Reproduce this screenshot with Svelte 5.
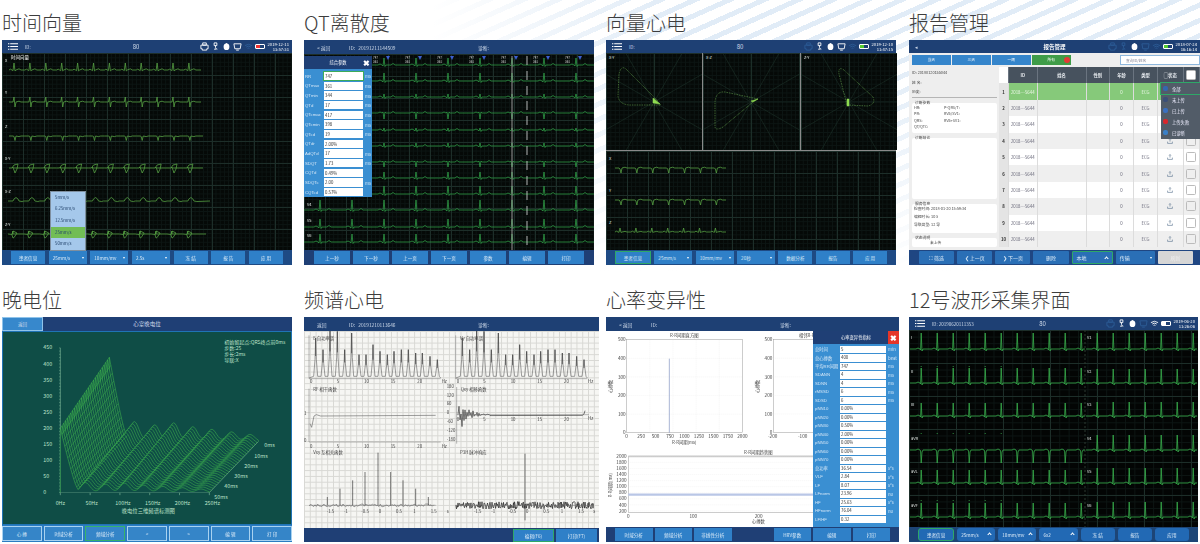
<script>
  // small seeded random so the noisy traces stay the same on every load
  let seed = 11
  const rnd = () => (seed = (seed * 16807) % 2147483647) / 2147483647

  // repeat one beat template along a baseline
  const wave = (x0, y, pitch, n, end, tpl) => {
    let d = `M${x0} ${y}`
    for (let i = 0; i < n; i++) {
      const bx = x0 + i * pitch
      for (const [dx, dy] of tpl) d += `L${(bx + dx).toFixed(1)} ${(y + dy).toFixed(1)}`
    }
    return d + `L${end} ${y}`
  }

  const beat = (r, s = 1, t = 1.5) => [[0, 0], [1.5, -0.8], [3, 0], [4, s], [5, -r], [6, s * 1.5], [7, 0], [10, -t], [12, 0]]

  const timeRows = [
    { label: 'X', y: 17, x: 7, end: 199, tpl: beat(7, 0.6, 1.2) },
    { label: 'Y', y: 49, x: 7, end: 199, tpl: [[0, 0], [4, 0], [5, -5], [6, 5], [7, 0], [10, -0.8], [12, 0]] },
    { label: 'Z', y: 83, x: 7, end: 201, tpl: [[0, 0], [4, 0], [5, 0.5], [6, 4.5], [7, 0], [10, 0.6], [12, 0]] },
    { label: 'X-Y', y: 115, x: 7, end: 201, tpl: [[0, 0], [3, 0], [5, -3], [9, -4], [8, 1], [6, 5], [5, 2], [3.5, -1], [4, 0], [8, 0]] },
    { label: 'X-Z', y: 148, x: 6, end: 208, tpl: [[0, 0], [5, 0], [6, -2], [8, -3.5], [10, -2], [11, 0], [14, 0.5]] },
    { label: 'Z-Y', y: 181, x: 6, end: 204, tpl: [[0, 0], [4, 0.5], [5, -3], [9, -1], [6, 3.5], [5, 4], [4, 1], [5, -3], [5, 0], [8, 0]] }
  ]

  const qtBeat = (r) => [[0, 0], [10, 0], [12, -1], [14, 0], [15, r > 0 ? 1 : -1], [16, -r], [17, r > 0 ? 1.5 : -1], [18, 0], [23, 0], [25, -1.5], [27, 0]]
  const qtRows = [
    [11, 7], [27, 8], [43, 3], [59, -6], [76, 2], [92, 3], [108, -5], [124, 6], [140, 8], [156, 10], [173, 8], [188, 8]
  ].map(([y, r]) => wave(0, y, 32, 9, 290, qtBeat(r)))
  const qtLeads = [['V4', 152], ['V5', 168], ['V6', 183]]
  const qtMarks = [0, 1, 2, 3, 4, 5, 6].map((i) => 84 + i * 32)

  const qtParams = [
    ['RR', '747', 'ms'], ['QTmax', '361', 'ms'], ['QTmin', '344', 'ms'], ['QTd', '17', 'ms'], ['QTcmax', '417', 'ms'],
    ['QTcmin', '398', 'ms'], ['QTcd', '19', 'ms'], ['QTdr', '2.00%', ''], ['AdQTd', '17', 'ms'], ['SDQT', '1.73', 'ms'],
    ['CQTd', '0.49%', ''], ['SDQTc', '2.00', 'ms'], ['CQTcd', '0.57%', '']
  ]

  const spokes = [0, 30, 60, 90, 120, 150]
  const loops = [
    { label: 'X-Y', d: 'M52 48L20 16Q15 12 13 21L12 43Q13 51 23 52L55 52L48 45', core: 'M47 45L54 51L47 50Z' },
    { label: 'X-Z', d: 'M55 46L22 39Q13 38 12 49L12 74Q13 78 20 74L50 49', core: 'M48 48L55 46L50 49Z' },
    { label: 'Z-Y', d: 'M46 52L38 21Q37 13 43 17L72 44Q75 51 67 53L46 52', core: 'M46 46L48 46L48 53L46 53Z' }
  ]
  const vecDown = [[0, 0], [4, 0], [5, 1], [6, 5], [7, 0], [10, -0.8], [12, 0]]
  const vecRows = [
    { label: 'X', y: 17, x: 9, n: 7, end: 120, tpl: vecDown },
    { label: 'Y', y: 49, x: 9, n: 7, end: 120, tpl: vecDown },
    { label: 'Z', y: 81, x: 9, n: 7, end: 120, tpl: beat(4, 0.3, 0.6) }
  ]

  // waterfall plot of the late potential screen, worked out in 3x coordinates
  const px = (f, d) => 178 + (f / 250) * 447 + d * 147
  const py = (d, h) => 658 - d * 153 - h * 0.964
  const humps = [[42, 62], [76, 52], [108, 58], [140, 46], [172, 38], [205, 30], [236, 22]]
  const height = (f, d) => {
    let h = f < 30 ? (200 + 62 * d) * Math.pow(1 - f / 30, 1.15) : 0
    for (const [c, a] of humps) {
      const u = (f - c) / 11
      h += a * (0.5 + 0.5 * d) * Math.exp(-u * u)
    }
    return h
  }
  const steps = 28
  const slices = []
  for (let i = 0; i <= steps; i++) {
    const d = 1 - i / steps
    let line = `M${px(0, d).toFixed(1)} ${py(d, 0).toFixed(1)}`
    for (let f = 0; f <= 250; f += 2.5) line += `L${px(f, d).toFixed(1)} ${py(d, height(f, d)).toFixed(1)}`
    slices.push(line + `L${px(250, d).toFixed(1)} ${py(d, 0).toFixed(1)}`)
  }
  const wallLines = []
  for (let f = 0; f <= 30; f += 2.5) {
    let line = ''
    for (let i = 0; i <= steps; i++) {
      const d = i / steps
      line += `${i ? 'L' : 'M'}${px(f, d).toFixed(1)} ${py(d, height(f, d)).toFixed(1)}`
    }
    wallLines.push(line)
  }
  const zAxis = [450, 400, 350, 300, 250, 200, 150, 100, 50, 0]
  const minorTicks = Array.from({ length: 46 }, (_, i) => 658 - i * 9.64)
  const fAxis = ['0Hz', '50Hz', '100Hz', '150Hz', '200Hz', '250Hz']
  const depthAxis = [['0ms', 790, 523], ['10ms', 760, 554], ['20ms', 730, 585], ['30ms', 700, 615], ['40ms', 670, 646], ['50ms', 640, 677]]

  // spectrum screen, also in 3x coordinates
  const spectrumPeaks = [
    [45, 120], [67, 85], [88, 145], [110, 140], [132, 85], [153, 135], [175, 70], [196, 70], [217, 100],
    [238, 80], [260, 70], [280, 80], [302, 85], [323, 85], [345, 75], [365, 75], [388, 65], [410, 55]
  ]
  const spectrum = (off) => {
    let d = `M${25 + off} 318`
    for (const [x, h] of spectrumPeaks) d += `L${x - 6 + off} 313L${x - 2 + off} ${302 - h / 3}L${x + off} ${318 - h}L${x + 2 + off} ${302 - h / 3}L${x + 6 + off} 313`
    return d + `L${420 + off} 318`
  }
  const spectrumTops = (off) => spectrumPeaks.map(([x, h]) => `M${x + off} ${318 - h}V${318 - h * 0.55}`).join('')
  const coherence = 'M28 455L33 466L40 432L47 428L60 432L405 430'
  let phase = 'M472 428'
  for (let x = 472; x < 570; x += 3) {
    const a = x < 540 ? 62 * Math.exp(-(x - 472) / 30) : 3
    phase += `L${x} ${(428 + (x % 2 ? -a : a) * rnd()).toFixed(1)}`
  }
  phase += 'L845 430L850 426L853 416'
  const crossPeaks = [[80, 25], [118, 50], [156, 75], [193, 100], [232, 158], [270, 100], [307, 75], [345, 50], [383, 25]]
  let cross = 'M25 700'
  for (let x = 27; x < 400; x += 4) cross += `L${x} ${(700 + (rnd() - 0.5) * 8).toFixed(1)}`
  let noise = 'M465 700'
  for (let x = 466; x < 880; x += 1.5) noise += `L${x} ${(700 + (rnd() - 0.5) * 22).toFixed(1)}`
  const specTicks = [['0', 28], ['5', 108], ['10', 190], ['15', 270], ['20', 350]]
  const lagTicks = ['-1.5', '-1', '-0.5', '0', '0.5', '1', '1.5']
  const phaseTicks = ['180', '120', '60', '0', '-60', '-120', '-180']

  // HRV screen
  const hrvParams = [
    ['总时间', '5', 'min'], ['总心搏数', '400', 'beat'], ['平均RR间期', '747', 'ms'], ['SDANN', '4', 'ms'], ['SDNN', '4', 'ms'],
    ['rMSSD', '6', 'ms'], ['SDSD', '6', 'ms'], ['pNN10', '0.00%', ''], ['pNN20', '0.00%', ''], ['pNN30', '0.50%', ''],
    ['pNN40', '2.00%', ''], ['pNN50', '0.00%', ''], ['pNN60', '0.00%', ''], ['pNN70', '0.00%', ''], ['总功率', '36.54', 's²s'],
    ['VLF', '2.84', 's²s'], ['LF', '8.07', 's²s'], ['LFnorm', '23.96', 'nu'], ['HF', '25.63', 's²s'], ['HFnorm', '76.04', 'nu'],
    ['LF/HF', '0.32', '']
  ]
  const histY = [500, 400, 300, 200, 100, 0]
  const histX = [0, 250, 500, 750, 1000, 1250, 1500, 1750, 2000]
  const trendY = [2000, 1800, 1600, 1400, 1200, 1000, 800, 600, 400, 200]

  // 12 lead capture screen
  const leadBeat = (r, s = 1) => [[0, 0], [6, 0], [8, -1], [10, 0], [10.6, s], [11.2, -r], [12, s * 2], [13, 0], [14, 0]]
  const leads = [
    ['I', 'V1', 19, 16, 16, false], ['II', 'V2', 53, 15, 14, true], ['III', 'V3', 86, 13, 14, false],
    ['aVR', 'V4', 120, -13, 15, true], ['aVL', 'V5', 153, 13, 15, false], ['aVF', 'V6', 187, 14, 15, true]
  ]
  const leadRows = leads.map(([a, b, y, ra, rb, dotted]) => ({
    a, b, y,
    left: wave(1, y, 16, 11, 176, leadBeat(ra)),
    right: wave(177, y, 16, 7, 288, leadBeat(rb)),
    dots: dotted ? [0, 1, 2, 3, 4, 5].map((i) => 12.2 + i * 16) : []
  }))

  const report = Array.from({ length: 10 }, (_, i) => i + 1)
  const statusItems = [['全部', '#3467b0'], ['未上传', '#3b4f78'], ['已上传', '#3a6fc0'], ['上传失败', '#d9262c'], ['已诊断', '#3a80c8']]
  const speeds = ['5mm/s', '6.25mm/s', '12.5mm/s', '25mm/s', '50mm/s']

  const statusIcons = {
    printer: 'M3 1h4v2.5H3zM1 3.5h8v4H7.5V9h-5V7.5H1z',
    probe: 'M3.5 1h3v3h-3zM5 4v2q0 2 2 2M3.5 8h2',
    tablet: 'M1 2h8l-1 5.5H2zM3.5 9h3',
    wifi: 'M1 4q4-3 8 0M2.5 5.6q2.5-2 5 0M4 7.2q1-.8 2 0'
  }
</script>

{#snippet menuIcon()}
  <svg class="menu" viewBox="0 0 10 7" width="10" height="7">
    <path d="M0 .8h1.4M2.2 .8H10M0 3.5h1.4M2.2 3.5H10M0 6.2h1.4M2.2 6.2H10" stroke="#fff" stroke-width="1.1" />
  </svg>
{/snippet}

{#snippet status(date, time, battery = '#e33', dim = [])}
  <div class="status">
    {#each Object.entries(statusIcons) as [name, d]}
      <svg class:dim={dim.includes(name)} viewBox="0 0 10 10" width="9" height="9">
        <path {d} fill="none" stroke="currentColor" />
      </svg>
      {#if name === 'probe'}
        <svg viewBox="0 0 10 10" width="9" height="9">
          <path d="M5 1a.8.8 0 0 1 .8.8c2 .3 2.4 2 2.4 3.7 0 2.4-1.4 3.5-3.2 3.5S1.8 7.9 1.8 5.5c0-1.7.4-3.4 2.4-3.7A.8.8 0 0 1 5 1z" fill="#fff" />
        </svg>
      {/if}
    {/each}
    <span class="battery"><i style="background:{battery}"></i></span>
    <span class="clock">{date}<br />{time}</span>
  </div>
{/snippet}

{#snippet footer(buttons, kind = '')}
  <div class="foot {kind}">
    {#each buttons as b}
      <span class="btn" class:active={b.active} class:caret={b.caret} class:up={b.up}>{b.t}</span>
    {/each}
  </div>
{/snippet}

{#snippet ecgSvg(rows, h = 197)}
  <svg width="290" height={h} viewBox="0 0 290 {h}">
    {#each rows as r}
      <text class="lead" x="3" y={r.y - 8}>{r.label}</text>
      <path class="trace" d={wave(r.x ?? 7, r.y, 15.9, r.n ?? 12, r.end ?? 120, r.tpl)} />
    {/each}
  </svg>
{/snippet}

<div class="page">
  <section class="card">
    <h2>时间向量</h2>
    <div class="screen">
      <div class="top">
        {@render menuIcon()}
        <span class="id">ID:</span>
        <span class="mid">80</span>
        {@render status('2019-12-11', '13:57:31', '#e33', ['wifi'])}
      </div>
      <div class="body grid">
        <span class="name">时间向量</span>
        {@render ecgSvg(timeRows)}
        <ul class="speeds">
          {#each speeds as s}
            <li class:on={s === '25mm/s'}>{s}</li>
          {/each}
        </ul>
      </div>
      {@render footer([{ t: '患者信息' }, { t: '25mm/s', caret: true }, { t: '10mm/mv', caret: true }, { t: '2.5s', caret: true }, { t: '冻 结' }, { t: '报 告' }, { t: '应 用' }])}
    </div>
  </section>

  <section class="card">
    <h2>QT离散度</h2>
    <div class="screen">
      <div class="top plain">
        <span class="back">&lt; 返回</span>
        <span class="id">ID: &nbsp; 20191211144509</span>
        <span class="diag">诊断:</span>
      </div>
      <div class="body grid">
        <svg width="290" height="196" viewBox="0 0 290 196">
          {#each qtRows as d}
            <path class="trace dark" {d} />
          {/each}
          {#each qtLeads as [label, y]}
            <text class="lead" x="3" {y}>{label}</text>
          {/each}
          {#each qtMarks as x}
            <path d="M{x - 2} 2h4l-2 4z" fill="#3c5fd0" />
            <text class="tiny" x={x - 15} y="5">747</text>
            <text class="tiny" x={x - 15} y="9">361</text>
          {/each}
          <path d="M208 2V196" stroke="#9a9a9a" stroke-width="1" />
          <path d="M223 2V196" stroke="#ddd" stroke-width="0.8" stroke-dasharray="9 6" />
        </svg>
        <div class="dialog">
          <div class="dialog-head">综合参数<b class="close">✖</b></div>
          {#each qtParams as [label, value, unit], i}
            <div class="param">
              <span class="p-label">{label}</span>
              <span class="p-value" class:focus={i === 0}>{value}</span>
              <span class="p-unit">{unit}</span>
            </div>
          {/each}
        </div>
      </div>
      {@render footer([{ t: '上一秒' }, { t: '下一秒' }, { t: '上一页' }, { t: '下一页' }, { t: '参数' }, { t: '编辑' }, { t: '打印' }], 'wide')}
    </div>
  </section>

  <section class="card">
    <h2>向量心电</h2>
    <div class="screen">
      <div class="top">
        {@render menuIcon()}
        <span class="id">ID:</span>
        <span class="mid">80</span>
        {@render status('2019-12-10', '11:47:15', '#5c3', ['printer', 'wifi'])}
      </div>
      <div class="body vector">
        <div class="loops">
          {#each loops as loop}
            <div class="loop grid fine">
              <svg width="96" height="97" viewBox="0 0 96 97">
                {#each spokes as a}
                  <line class="spoke" x1={48 - 80 * Math.cos((a * Math.PI) / 180)} y1={49 - 80 * Math.sin((a * Math.PI) / 180)} x2={48 + 80 * Math.cos((a * Math.PI) / 180)} y2={49 + 80 * Math.sin((a * Math.PI) / 180)} />
                {/each}
                <text class="lead" x="3" y="6">{loop.label}</text>
                <path class="dots" d={loop.d} />
                <path d={loop.core} fill="#8fdc50" stroke="#8fdc50" stroke-width="0.5" />
              </svg>
            </div>
          {/each}
        </div>
        <div class="grid lower">
          {@render ecgSvg(vecRows, 97)}
        </div>
      </div>
      {@render footer([{ t: '患者信息', active: true }, { t: '25mm/s', caret: true }, { t: '10mm/mv', caret: true }, { t: '20秒', caret: true }, { t: '数据分析' }, { t: '报告' }, { t: '应 用' }])}
    </div>
  </section>

  <section class="card">
    <h2>报告管理</h2>
    <div class="screen report">
      <div class="top">
        <span class="back">◂</span>
        <span class="mid strong">报告管理</span>
        {@render status('2018-07-24', '16:16:14', '#5c3', ['printer', 'probe', 'tablet', 'wifi'])}
      </div>
      <div class="tabs">
        <span>当天</span><span>三天</span><span>一周</span>
        <span class="all">所有<i></i></span>
        <span class="search">查询ID/姓名</span>
      </div>
      <div class="main">
        <aside>
          <p>ID: 20180120155044</p>
          <p>姓 名:</p>
          <p class="rule">历史:</p>
          <div class="box b1">
            <em>诊断参数</em>
            <div class="pairs"><span>HR:</span><span>P-QRS/T:</span><span>PR:</span><span>RV5/SV1:</span><span>QRS:</span><span>RV5+SV1:</span><span>QT/QTC:</span></div>
          </div>
          <div class="box b2"><em>诊断结论</em></div>
          <div class="box b3">
            <em>服务信息</em>
            <span>检查时间: 2018-01-20 15:59:34</span>
            <span>编辑时长: 10 s</span>
            <span>导联类型: 12 导</span>
          </div>
          <div class="box b4"><em>状态说明</em><span>未上传</span></div>
        </aside>
        <div class="table">
          <div class="row head">
            <span class="num blank"></span><span>ID</span><span>姓名</span><span>性别</span><span>年龄</span><span>类型</span><span>▢状态</span><span class="check"><i></i></span>
          </div>
          {#each report as n}
            <div class="row" class:sel={n === 1} class:odd={n % 2 === 0}>
              <span class="num">{n}</span>
              <span>2018---5644</span><span></span><span></span><span>0</span><span>ECG</span>
              <span>
                <svg viewBox="0 0 10 10" width="6" height="6"><path d="M5 1v5M3.5 2.500 5 1l1.500 1.500M1 6v3h8V6" fill="none" stroke="#56708c" /></svg>
              </span>
              <span class="check"><i></i></span>
            </div>
          {/each}
          <ul class="filter">
            {#each statusItems as [label, color], i}
              <li class:on={i === 0}><i style="background:{color}"></i>{label}</li>
            {/each}
          </ul>
        </div>
      </div>
      {@render footer([{ t: '⛶ 筛选' }, { t: '❮ 上一页' }, { t: '❯ 下一页' }, { t: '删除' }, { t: '本地', active: true, up: true }, { t: '传输', caret: true }, { t: '刷新' }], 'tools')}
    </div>
  </section>

  <section class="card">
    <h2>晚电位</h2>
    <div class="screen teal">
      <div class="top titlebar">
        <span class="tab">返回</span>
        <span class="mid">心室晚电位</span>
      </div>
      <div class="body lp">
        <svg width="288" height="193" viewBox="6 177 864 578">
          {#each minorTicks as y}
            <path d="M174 {y}h4" stroke="#9ed6b0" stroke-width="1" />
          {/each}
          {#each zAxis as v, i}
            <text class="axis" x="127" y={229 + i * 48.2}>{v}</text>
          {/each}
          {#each fAxis as v, i}
            <text class="axis" x={164 + i * 89.4} y="696">{v}</text>
            <path d="M{178 + i * 89.4} 658v8" stroke="#9ed6b0" stroke-width="1.500" />
          {/each}
          <path d="M178 224V658H625L772 505" fill="none" stroke="#9ed6b0" stroke-width="1.500" />
          {#each depthAxis as [v, x, y]}
            <text class="axis" {x} {y}>{v}</text>
          {/each}
          {#each slices as d}
            <path class="slice" {d} />
          {/each}
          {#each wallLines as d}
            <path class="wall" {d} />
          {/each}
          <text class="axis info" x="670" y="212">初始留起点:QRS终点前0ms</text>
          <text class="axis info" x="670" y="231">步数:25</text>
          <text class="axis info" x="670" y="250">步长:2ms</text>
          <text class="axis info" x="670" y="267">导联:X</text>
          <text class="axis" x="362" y="719">晚电位三维频谱标测图</text>
        </svg>
      </div>
      {@render footer([{ t: '心 搏' }, { t: '时域分析' }, { t: '频域分析', active: true }, { t: '<' }, { t: '>' }, { t: '编 辑' }, { t: '打 印' }], 'boxed')}
    </div>
  </section>

  <section class="card">
    <h2>频谱心电</h2>
    <div class="screen spec">
      <div class="top plain">
        <span class="back">返回</span>
        <span class="id">ID: &nbsp; 20191210113646</span>
        <span class="diag">诊断:</span>
      </div>
      <div class="body paper">
        <svg width="295" height="197" viewBox="10 177 885 591">
          <path class="gray" d={spectrum(0)} />
          <path class="gray" d={spectrum(440)} />
          <path class="ink" d={spectrumTops(0)} />
          <path class="ink" d={spectrumTops(440)} />
          <path class="gray" d={coherence} />
          <path class="ink" d={phase} />
          <path class="gray" d={cross} />
          {#each crossPeaks as [x, h]}
            <path class="ink" d="M{x} 700V{700 - h}" />
          {/each}
          <path class="noise" d={noise} />
          <path class="ink" d="M673 545V745" />
          <path class="axisline" d="M25 190V320H420M465 190V320H860M25 350V510H420M468 345V515M468 428H865M25 700H405M465 700H880" />
          <text class="cap" x="38" y="204">E 自功率谱</text>
          <text class="cap" x="478" y="204">Vy 自功率谱</text>
          <text class="cap" x="38" y="358">RF 相干函数</text>
          <text class="cap" x="480" y="358">Qxy 相移函数</text>
          <text class="cap" x="38" y="546">Vxy 互相关函数</text>
          <text class="cap" x="478" y="546">P3H 脉冲响应</text>
          {#each specTicks as [v, x]}
            <text class="cap" {x} y="333">{v}</text>
            <text class="cap" x={x + 440} y="333">{v}</text>
            <text class="cap" {x} y="528">{v}</text>
            <text class="cap" x={x + 440} y="446">{v}</text>
          {/each}
          <text class="cap" x="423" y="333">Hz</text>
          <text class="cap" x="862" y="333">Hz</text>
          <text class="cap" x="423" y="528">Hz</text>
          <text class="cap" x="862" y="444">Hz</text>
          <text class="cap" x="10" y="429">1</text>
          <text class="cap" x="10" y="511">0</text>
          {#each phaseTicks as v, i}
            <text class="cap" x="438" y={347 + i * 26.500}>{v}</text>
          {/each}
          {#each lagTicks as v, i}
            <text class="cap" x={78 + i * 52} y="722">{v}</text>
            <text class="cap" x={520 + i * 52} y="722">{v}</text>
          {/each}
          <text class="cap" x="438" y="722">s</text>
          <text class="cap" x="878" y="722">s</text>
        </svg>
      </div>
      {@render footer([{ t: '编辑(F6)', active: true }, { t: '打印(F7)' }], 'right')}
    </div>
  </section>

  <section class="card">
    <h2>心率变异性</h2>
    <div class="screen hrv">
      <div class="top plain">
        <span class="back">&lt; 返回</span>
        <span class="id">ID:</span>
        <span class="diag">诊断:</span>
      </div>
      <div class="body white">
        <svg width="293" height="196" viewBox="18 177 879 588">
          <g class="chart">
            <text class="chart-title" x="253" y="195">R-R间期直方图</text>
            <text class="chart-title" x="620" y="195">相邻R-R</text>
            <rect x="80" y="203" width="347" height="279" />
            <rect x="520" y="203" width="347" height="279" />
            {#each [1, 2, 3, 4] as i}
              <path class="dotted" d="M80 {203 + i * 55.8}H427M{80 + i * 69.400} 203V482M520 {203 + i * 55.8}H867" />
            {/each}
            {#each histY as v, i}
              <text class="num-label" x="77" y={208 + i * 55.8}>{v}</text>
              <text class="num-label" x="517" y={208 + i * 55.8}>{v}</text>
            {/each}
            {#each histX as v, i}
              <text class="num-label mid-a" x={80 + i * 43.4} y="499">{v}</text>
            {/each}
            <text class="num-label" x="532" y="499">-200</text>
            <text class="num-label" x="622" y="499">-100</text>
            <text class="chart-title" x="253" y="517">R-R间期(ms)</text>
            <text class="chart-title v" transform="translate(37 343) rotate(-90)">心搏数</text>
            <text class="chart-title v" transform="translate(476 343) rotate(-90)">心搏数</text>
            <path d="M208 260V482" stroke="#7f8fc0" stroke-width="2" />
          </g>
          <g class="chart">
            <text class="chart-title" x="475" y="547">R-R间期趋势图</text>
            <rect x="85" y="553" width="570" height="168" />
            <path d="M85 553H655" stroke="#c9c9c9" stroke-width="5" />
            {#each trendY as v, i}
              <text class="num-label" x="80" y={558 + i * 18.200}>{v}</text>
              <path class="dotted" d="M85 {553 + i * 18.200}H655" />
            {/each}
            <text class="num-label mid-a" x="85" y="737">0</text>
            <text class="num-label mid-a" x="280" y="737">100</text>
            <text class="num-label mid-a" x="476" y="737">200</text>
            <text class="chart-title" x="475" y="754">心搏数</text>
            <text class="chart-title v" transform="translate(36 640) rotate(-90)">R-R间期(ms)</text>
            <path d="M85 668H655" stroke="#b9c6e6" stroke-width="7" />
          </g>
        </svg>
        <div class="hrv-panel">
          <div class="hrv-head">心率变异性指标<b>✖</b></div>
          {#each hrvParams as [label, value, unit]}
            <div class="hrv-row">
              <span class="p-label">{label}</span>
              <span class="p-value">{value}</span>
              <span class="p-unit">{unit}</span>
            </div>
          {/each}
        </div>
      </div>
      {@render footer([{ t: '时域分析' }, { t: '频域分析' }, { t: '非线性分析' }, { t: 'HRV参数' }, { t: '编辑' }, { t: '打印' }], 'gapped')}
    </div>
  </section>

  <section class="card">
    <h2>12号波形采集界面</h2>
    <div class="screen capture">
      <div class="top">
        {@render menuIcon()}
        <span class="id">ID: 20190620111353</span>
        <span class="mid">80</span>
        {@render status('2019-06-20', '11:26:06', '#fff', ['printer', 'tablet'])}
      </div>
      <div class="body grid soft">
        <svg width="289" height="197" viewBox="0 0 289 197">
          <path d="M176 0V197" stroke="#2c3a30" stroke-dasharray="2 2" />
          {#each leadRows as r}
            <text class="lead" x="2" y={r.y - 10}>{r.a}</text>
            <text class="lead" x="178" y={r.y - 10}>{r.b}</text>
            <path class="trace bright" d={r.left} />
            <path class="trace bright" d={r.right} />
            {#each r.dots as x}
              <path class="trace bright" d="M{x} {r.y - 17}v1" />
            {/each}
          {/each}
        </svg>
      </div>
      {@render footer([{ t: '患者信息', active: true }, { t: '25mm/s', up: true }, { t: '10mm/mv', up: true }, { t: '6x2', up: true }, { t: '冻 结' }, { t: '报告' }, { t: '应用' }], 'round')}
    </div>
  </section>
</div>

<style>
  :global(body) {
    margin: 0;
    background: #fff;
  }

  .page {
    width: 1200px;
    height: 544px;
    overflow: hidden;
    box-sizing: border-box;
    padding-left: 2px;
    display: grid;
    grid-template-columns: 302px 302px 303px 291px;
    grid-auto-rows: 277px;
    font-family: "Noto Sans CJK SC", "Noto Sans", sans-serif;
    background:
      linear-gradient(180deg, transparent 10%, #fff 50%),
      linear-gradient(90deg, #fff 36%, transparent 56%),
      repeating-linear-gradient(-24deg, #e1ecf7 0 5px, #fff 5px 14px);
  }

  h2 {
    margin: 0;
    height: 40px;
    line-height: 46px;
    font-size: 20px;
    font-weight: 300;
    color: #3d3d3d;
  }

  /* every screen is a downscaled photo in the reference, so it stays a bit soft */
  .screen {
    position: relative;
    width: 290px;
    height: 225px;
    display: flex;
    flex-direction: column;
    color: #fff;
    background: #1f3f75;
    filter: blur(0.3px);
  }

  .top {
    height: 13px;
    flex: none;
    display: flex;
    align-items: center;
    padding: 0 3px 0 6px;
    background: #1e4074;
    font-size: 4.5px;
    color: #cfdaea;
    position: relative;
  }

  .id {
    margin-left: 7px;
  }

  /* the heart rate sits left of centre, the report title in the middle */
  .mid {
    position: absolute;
    left: 0;
    right: 22px;
    text-align: center;
    font-size: 6px;
  }

  .mid.strong,
  .titlebar .mid {
    right: 0;
    font-size: 5.5px;
  }

  .strong {
    font-weight: 700;
    color: #fff;
  }

  .top.plain {
    height: 14px;
    padding-left: 13px;
    font-size: 4.8px;
  }

  .plain .back {
    width: 32px;
    flex: none;
  }

  .top.plain .id {
    margin-left: 0;
    width: 129px;
    flex: none;
  }

  .status {
    margin-left: auto;
    display: flex;
    align-items: center;
    gap: 2px;
    color: #fff;
    position: relative;
    z-index: 1;
  }

  .status .dim {
    color: #2c5c96;
  }

  .battery {
    width: 10px;
    height: 5px;
    box-sizing: border-box;
    border: 1px solid #fff;
    border-radius: 1px;
    display: flex;
  }

  .battery i {
    width: 4px;
  }

  .clock {
    font-size: 4.2px;
    line-height: 4.800px;
    text-align: right;
    margin-left: 1px;
  }

  .body {
    position: relative;
    flex: 1;
    min-height: 0;
    display: block;
  }

  .body svg,
  .grid svg {
    display: block;
  }

  .grid {
    background-color: #050907;
    background-image:
      linear-gradient(#1d2e29 1px, transparent 1px),
      linear-gradient(90deg, #1d2e29 1px, transparent 1px),
      linear-gradient(#0c1513 1px, transparent 1px),
      linear-gradient(90deg, #0c1513 1px, transparent 1px);
    background-size: 21px 22px, 21px 22px, 4.2px 4.4px, 4.2px 4.4px;
  }

  .grid.soft {
    background-color: #030504;
    background-size: 47px 33px, 47px 33px, 9.4px 6.6px, 9.4px 6.6px;
  }

  .grid.fine {
    background-size: 96px 97px, 48px 97px, 4.4px 4.4px, 4.4px 4.4px;
  }

  .name {
    position: absolute;
    left: 9px;
    top: 0.5px;
    font-size: 4.5px;
  }

  .lead {
    fill: #dfe6e2;
    font-size: 4px;
  }

  .tiny {
    fill: #d8d8d8;
    font-size: 3px;
  }

  .trace {
    fill: none;
    stroke: #569f43;
    stroke-width: 0.8;
  }

  .trace.dark {
    stroke: #2f9a45;
  }

  .trace.bright {
    stroke: #38b04d;
  }

  .speeds {
    position: absolute;
    left: 48px;
    bottom: -1px;
    width: 36px;
    margin: 0;
    padding: 0;
    list-style: none;
    background: #a5c8eb;
    border: 1px solid #7f8f9f;
    box-sizing: border-box;
    font-size: 4.3px;
    color: #24446c;
  }

  .speeds li {
    height: 11.7px;
    line-height: 11.7px;
    padding-left: 4px;
  }

  .speeds .on {
    background: #72bd55;
  }

  .foot {
    height: 15px;
    flex: none;
    box-sizing: border-box;
    display: flex;
    gap: 3.5px;
    padding: 1px 9px;
    background: #1e4a84;
    font-size: 4.6px;
  }

  .btn {
    position: relative;
    flex: 1;
    display: flex;
    align-items: center;
    justify-content: center;
    background: #2f80c8;
    color: #dcebf8;
    white-space: nowrap;
  }

  .btn.caret,
  .btn.up {
    justify-content: flex-start;
    padding-left: 4px;
  }

  .btn.caret::after {
    content: "";
    position: absolute;
    right: 3px;
    top: 5.5px;
    border: 1.5px solid transparent;
    border-top: 2px solid #fff;
  }

  .btn.up::after {
    content: "";
    position: absolute;
    right: 4px;
    top: 4.5px;
    width: 2px;
    height: 2px;
    border-left: 1px solid #fff;
    border-top: 1px solid #fff;
    transform: rotate(45deg);
  }

  .btn.active {
    box-sizing: border-box;
    border: 1px solid #2ea868;
  }

  .foot.wide {
    padding: 1px 10px;
    gap: 3px;
    background: #1f3f75;
  }

  /* QT dialog */
  .dialog {
    position: absolute;
    left: 0;
    top: 2px;
    width: 68px;
    height: 141px;
    background: #3a8fd2;
    font-size: 4.3px;
    box-sizing: border-box;
    padding-bottom: 2px;
  }

  .dialog-head {
    position: relative;
    height: 13px;
    margin-bottom: 2.5px;
    line-height: 13px;
    text-align: center;
    background: #1f3f75;
  }

  .close {
    position: absolute;
    right: 2px;
    top: 0;
    font-size: 8px;
    color: #fff;
  }

  .param {
    display: flex;
    align-items: center;
    height: 9.66px;
  }

  .p-label {
    width: 19px;
    padding-left: 1px;
    color: #d4e6f6;
    flex: none;
    white-space: nowrap;
    font-family: "Liberation Sans", "Noto Sans CJK SC", sans-serif;
  }

  .p-value {
    flex: none;
    width: 39px;
    height: 8.300px;
    line-height: 8.300px;
    background: #fff;
    color: #333;
    padding-left: 1px;
    box-sizing: border-box;
  }

  .p-value.focus {
    outline: 0.7px solid #3cab5a;
    outline-offset: -0.7px;
  }

  .p-unit {
    margin-left: 2px;
    color: #cfe4f6;
  }

  /* vector ECG */
  .vector {
    display: flex;
    flex-direction: column;
    background: #8a8a8a;
  }

  .loops {
    display: grid;
    grid-template-columns: 96px 96.500px 96.500px;
    gap: 1px;
    height: 97px;
    margin-bottom: 1px;
  }

  .loop {
    overflow: hidden;
  }

  .spoke {
    stroke: #1d3029;
    stroke-width: 0.6;
  }

  .dots {
    fill: none;
    stroke: #78c25a;
    stroke-width: 0.7;
    stroke-dasharray: 0.7 1;
  }

  .lower {
    flex: 1;
    min-height: 0;
  }

  /* report table */
  .report {
    width: 291px;
    background: #eee;
  }

  .tabs {
    height: 14px;
    flex: none;
    display: flex;
    align-items: center;
    gap: 1.5px;
    padding: 0 0 0 3px;
    background: #eee;
    font-size: 3.8px;
  }

  .tabs span {
    width: 38.5px;
    height: 10px;
    line-height: 10px;
    text-align: center;
    background: #3585cb;
  }

  .tabs .all {
    position: relative;
    background: #3f9c48;
  }

  .all i {
    position: absolute;
    right: 1px;
    top: 2px;
    width: 6px;
    height: 6px;
    border-radius: 50%;
    background: #e53935;
  }

  .tabs .search {
    width: 80px;
    margin-left: auto;
    text-align: left;
    padding-left: 5px;
    box-sizing: border-box;
    color: #889;
    background: #fff;
    border: 0.5px solid #8db7dd;
  }

  .main {
    flex: 1;
    min-height: 0;
    display: flex;
    color: #444;
  }

  aside {
    width: 90px;
    flex: none;
    box-sizing: border-box;
    padding: 1px 2px 0 3px;
    font-size: 3.8px;
    display: flex;
    flex-direction: column;
    background: #eee;
  }

  aside p {
    margin: 0;
    height: 9.5px;
    line-height: 9.5px;
  }

  aside .rule {
    height: 10px;
    border-bottom: 1px solid #b5b5b5;
    margin-bottom: 5px;
  }

  .box {
    position: relative;
    flex: none;
    background: #fff;
    border-radius: 2px;
    margin-bottom: 5px;
    padding: 3px 2px;
    box-sizing: border-box;
    display: flex;
    flex-direction: column;
    gap: 3.5px;
    line-height: 1.2;
  }

  .box em {
    position: absolute;
    left: 3px;
    top: -2px;
    font-style: normal;
  }

  .b1 {
    height: 30px;
  }

  .b2 {
    height: 61px;
  }

  .b3 {
    height: 29px;
  }

  .b4 {
    height: 9px;
    padding-left: 18px;
  }

  .pairs {
    display: grid;
    grid-template-columns: 30px 1fr;
    gap: 2px 0;
  }

  .table {
    position: relative;
    flex: 1;
    min-width: 0;
    font-size: 4.3px;
  }

  .row {
    height: 16.4px;
    display: grid;
    grid-template-columns: 10px 28.5px 49px 23.5px 24px 24px 25.500px 1fr;
    align-items: center;
    background: #fff;
    color: #667;
    text-align: center;
  }

  .row.odd {
    background: #efefef;
  }

  .row.sel {
    background: #86c97a;
    color: #eef8ea;
  }

  .row.head {
    background: #47525e;
    color: #e8ecf0;
    font-weight: 700;
  }

  .row > span {
    height: 100%;
    display: flex;
    align-items: center;
    justify-content: center;
    border-right: 0.5px solid #dcdcdc;
    box-sizing: border-box;
  }

  .row.head > span {
    border-color: #6a7480;
  }

  .row .num {
    background: #e4e4e4;
    color: #333;
    font-weight: 700;
  }

  .row .blank {
    background: #fff;
  }

  .check i {
    width: 10px;
    height: 10px;
    border: 0.6px solid #bbb;
    border-radius: 1.5px;
    background: #fff;
    box-sizing: border-box;
  }

  .row.odd .check i {
    background: #efefef;
  }

  .filter {
    position: absolute;
    right: 0;
    top: 16px;
    width: 39px;
    height: 56px;
    margin: 0;
    padding: 0;
    list-style: none;
    background: #525c68;
    color: #eef;
    font-size: 4.3px;
  }

  .filter li {
    height: 11px;
    display: flex;
    align-items: center;
    gap: 4px;
    padding-left: 2px;
    box-sizing: border-box;
  }

  .filter li i {
    width: 5px;
    height: 5px;
    border-radius: 2px;
  }

  .filter .on {
    outline: 0.7px solid #2ea868;
    outline-offset: -0.7px;
  }

  .foot.tools {
    padding: 1px 7px 1px 10px;
    gap: 3px;
    font-size: 5px;
    background: #1f4682;
  }

  .foot.tools .btn {
    border-radius: 1px;
    background: #2a6fb6;
  }

  .foot.tools .btn:last-child {
    background: #d6d6d6;
    color: #eee;
  }

  /* late potential */
  .teal .titlebar {
    height: 14px;
    padding: 0;
    background: #1f3f75;
  }

  .tab {
    width: 41px;
    height: 100%;
    box-sizing: border-box;
    border: 1px solid #8fc3ea;
    background: #3788cc;
    text-align: center;
    line-height: 12px;
  }

  .lp {
    background: #0f4d46;
    border: 1px solid #1f73b5;
    box-sizing: border-box;
  }

  .slice {
    fill: #0f4d46;
    stroke: #45bf4e;
    stroke-width: 1.5;
  }

  .wall {
    fill: none;
    stroke: #45bf4e;
    stroke-width: 1.2;
  }

  .axis {
    fill: #bfe3cb;
    font-size: 16px;
  }

  .axis.info {
    font-size: 15px;
  }

  .foot.boxed {
    height: 17px;
    padding: 1px 0;
    gap: 2px;
    background: #2b7cc2;
  }

  .foot.boxed .btn {
    border: 1px solid #a8d2f0;
    box-sizing: border-box;
    background: #3585c8;
  }

  .foot.boxed .btn.active {
    border-color: #36b36a;
  }

  /* spectrum */
  .spec {
    width: 295px;
  }

  .paper {
    background-color: #f6f6f3;
    background-image:
      linear-gradient(#d8d8d4 1px, transparent 1px),
      linear-gradient(90deg, #d8d8d4 1px, transparent 1px);
    background-size: 5.800px 5.800px;
  }

  .gray {
    fill: none;
    stroke: #6d6d6d;
    stroke-width: 2;
  }

  .ink {
    fill: none;
    stroke: #333;
    stroke-width: 2;
  }

  .noise {
    fill: none;
    stroke: #1c1c1c;
    stroke-width: 2;
  }

  .axisline {
    fill: none;
    stroke: #777;
    stroke-width: 1.5;
  }

  .cap {
    fill: #444;
    font-size: 13px;
  }

  .foot.right {
    height: 14px;
    padding: 1px 2px 0 0;
    gap: 2px;
    justify-content: flex-end;
    background: #1f3f75;
  }

  .foot.right .btn {
    flex: 0 0 41px;
  }

  /* HRV */
  .hrv {
    width: 293px;
  }

  .white {
    background: #fff;
  }

  .chart rect {
    fill: none;
    stroke: #999;
    stroke-width: 1.5;
  }

  .dotted {
    fill: none;
    stroke: #e4e4e4;
    stroke-width: 1;
    stroke-dasharray: 3 3;
  }

  .chart-title {
    fill: #444;
    font-size: 13px;
    text-anchor: middle;
  }

  .num-label {
    fill: #444;
    font-size: 14px;
    text-anchor: end;
  }

  .num-label.mid-a {
    text-anchor: middle;
  }

  .hrv-panel {
    position: absolute;
    right: 0;
    top: 0;
    width: 86px;
    height: 196px;
    background: #3a8fd2;
    font-size: 4.3px;
  }

  .hrv-head {
    position: relative;
    height: 13px;
    line-height: 13px;
    text-align: center;
    background: #1f3f75;
    margin-bottom: 1px;
  }

  .hrv-head b {
    position: absolute;
    right: 0;
    top: 0;
    width: 11px;
    height: 13px;
    background: #e53528;
    font-size: 8px;
  }

  .hrv-row {
    display: flex;
    align-items: center;
    height: 8.5px;
  }

  .hrv-row .p-label {
    width: 27px;
    padding-left: 2px;
    box-sizing: border-box;
  }

  .hrv-row .p-value {
    width: 46px;
    height: 7.500px;
    line-height: 7.500px;
  }

  .foot.gapped {
    gap: 2px;
    background: #1f3f75;
  }

  .foot.gapped .btn {
    flex: 0 0 37.500px;
  }

  .foot.gapped .btn:nth-child(3) {
    margin-right: 40px;
  }

  /* capture */
  .capture {
    width: 289px;
  }

  .foot.round {
    padding: 1px 9px;
    gap: 3px;
    background: #1d4576;
  }

  .foot.round .btn {
    border-radius: 3px;
    background: #2269b4;
  }
</style>
